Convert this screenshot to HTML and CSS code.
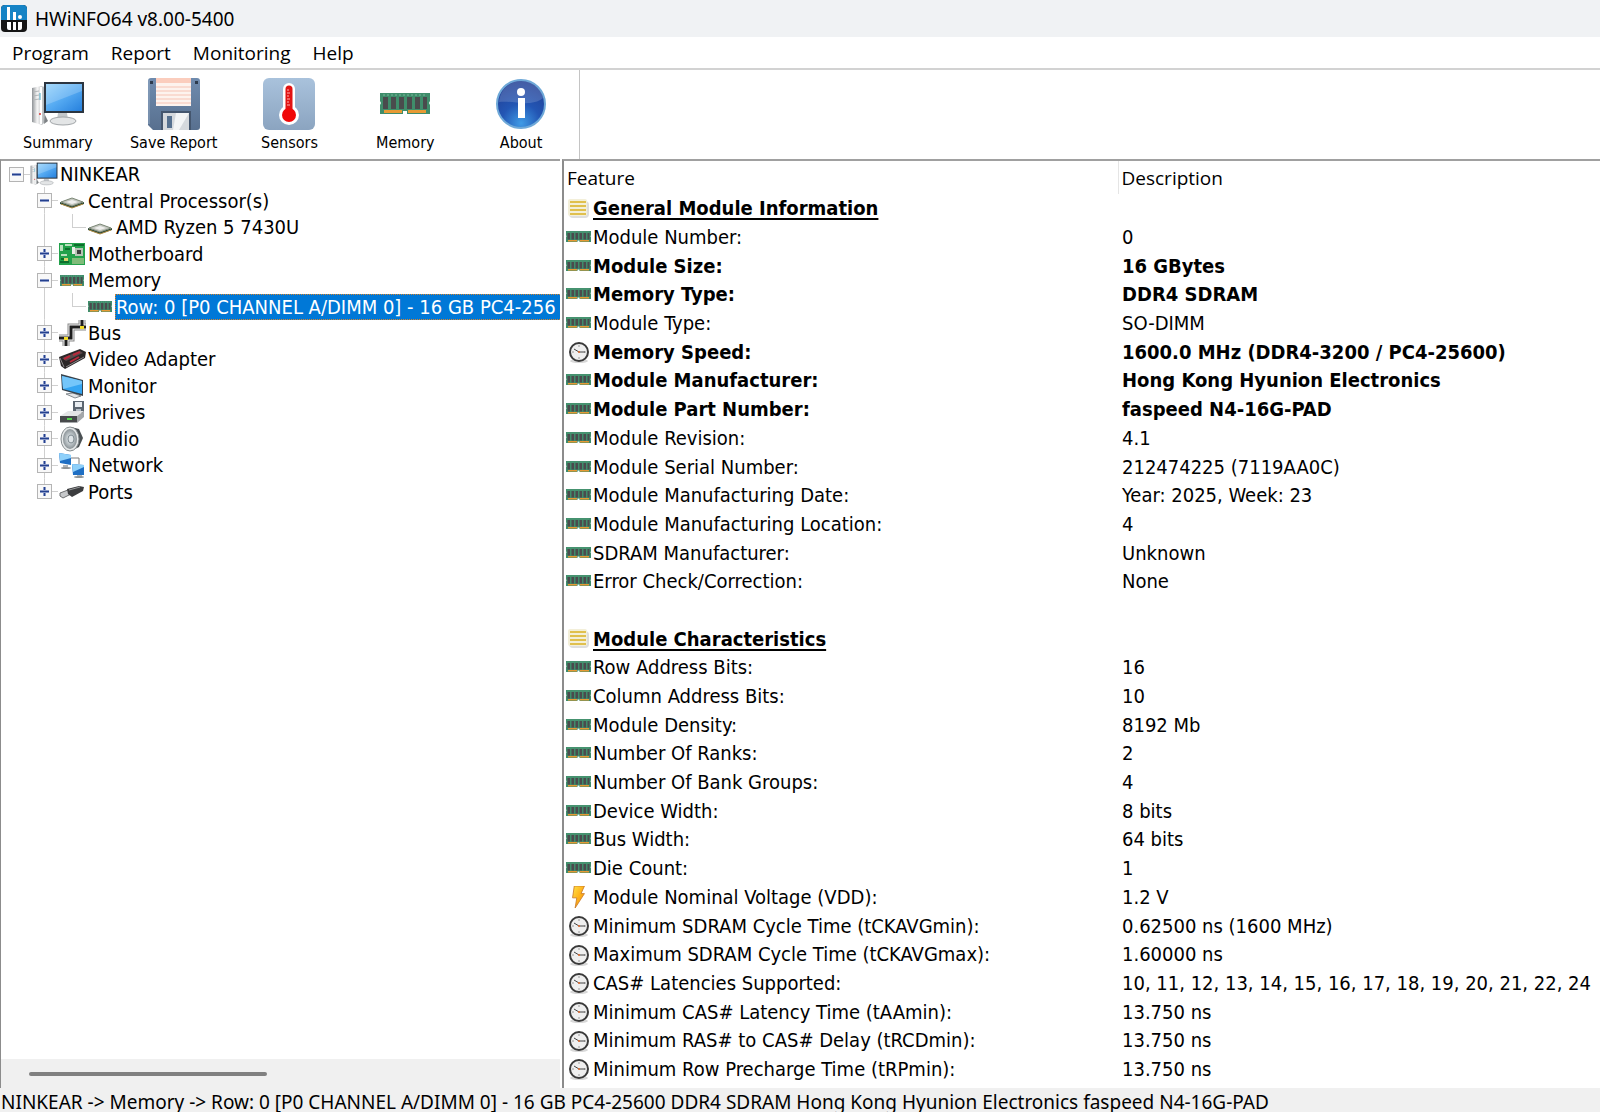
FILE: index.html
```
<!DOCTYPE html>
<html lang="en">
<head>
    <meta charset="UTF-8">
    <meta name="viewport" content="width=device-width, initial-scale=1.0">
    <title>HWiNFO64 v8.00-5400</title>
    <link rel="stylesheet" href="styles.css">
</head>
<body>
    <!-- shared icons -->
    <svg class="sprite" width="0" height="0" aria-hidden="true">
        <defs>
            <linearGradient id="screen" x1="0" y1="0" x2="1" y2="1">
                <stop offset="0" stop-color="#8fd0fb"/>
                <stop offset="0.5" stop-color="#55aaf2"/>
                <stop offset="1" stop-color="#2680dd"/>
            </linearGradient>
            <linearGradient id="metal" x1="0" y1="0" x2="1" y2="0">
                <stop offset="0" stop-color="#8e9296"/>
                <stop offset="0.4" stop-color="#f6f6f6"/>
                <stop offset="1" stop-color="#a9adb0"/>
            </linearGradient>
            <linearGradient id="steel" x1="0" y1="0" x2="0" y2="1">
                <stop offset="0" stop-color="#a9c2dc"/>
                <stop offset="1" stop-color="#8ba4c0"/>
            </linearGradient>
            <linearGradient id="floppy" x1="0" y1="0" x2="0" y2="1">
                <stop offset="0" stop-color="#6f8bae"/>
                <stop offset="1" stop-color="#58708f"/>
            </linearGradient>
            <radialGradient id="ball" cx="0.5" cy="0.9" r="0.9">
                <stop offset="0" stop-color="#3f9be6"/>
                <stop offset="0.45" stop-color="#2356b4"/>
                <stop offset="1" stop-color="#213d92"/>
            </radialGradient>
            <linearGradient id="flash" x1="0" y1="0" x2="1" y2="1">
                <stop offset="0" stop-color="#ffe34a"/>
                <stop offset="0.5" stop-color="#ffb31a"/>
                <stop offset="1" stop-color="#f08a10"/>
            </linearGradient>
            <radialGradient id="cone" cx="0.5" cy="0.5" r="0.5">
                <stop offset="0" stop-color="#f4f6f7"/>
                <stop offset="0.6" stop-color="#b4bcc0"/>
                <stop offset="1" stop-color="#8a9296"/>
            </radialGradient>
        </defs>
        <symbol id="i-computer" viewBox="0 0 54 46">
            <path d="M1 7l9-2 4 1v35l-3 3-10-3z" fill="url(#metal)"/>
            <path d="M2 11l6-1M2 15l6-1M2 19l6-1" stroke="#b3b6b8"/>
            <path d="M10 6v37" stroke="#fff" stroke-width="2"/>
            <path d="M9 12v7" stroke="#45a9c8"/>
            <circle cx="9" cy="33" r="1" fill="#d33"/>
            <path d="M14 34l3 6-4 3z" fill="#7d8184"/>
            <path d="M27 32h9l1 7H26z" fill="#c3c7ca"/>
            <ellipse cx="32" cy="40" rx="13" ry="4" fill="#e3e5e6" stroke="#a2a6a9"/>
            <path d="M13 1h40v31H13z" fill="#2c3540"/>
            <path d="M15 3h36v27H15z" fill="url(#screen)"/>
            <path d="M15 3h36v7L15 24z" fill="#fff" opacity="0.2"/>
        </symbol>
        <symbol id="i-memory" viewBox="0 0 50 21" preserveAspectRatio="none">
            <path d="M0 0h50v8l-1 2 1 2v9H27v-3h-4v3H0v-9l1-2-1-2z" fill="#3f8d6b"/>
            <path d="M3 4h5v12H3zM11 4h5v12h-5zM19 4h5v12h-5zM27 4h5v12h-5zM35 4h5v12h-5zM43 4h4v12h-4z" fill="#4a4b4d"/>
            <path d="M3 2h44" stroke="#79b79b" stroke-dasharray="2 2"/>
            <path d="M4 17h18v3H4zM28 17h18v3H28z" fill="#e79a34"/>
        </symbol>
        <symbol id="i-cpu" viewBox="0 0 28 26">
            <path d="M2 14l12 4 12-4v2l-12 4-12-4z" fill="#2f4a35"/>
            <path d="M3 14l11-4 11 4-11 4z" fill="#c4c7c0" stroke="#7b8776"/>
            <path d="M8 14l6-2 6 2-6 2z" fill="#efefed"/>
            <path d="M3 16l11 4 11-4" fill="none" stroke="#b08c46"/>
        </symbol>
        <symbol id="i-board" viewBox="0 0 28 26">
            <path d="M1 2h26v22H1z" fill="#22a14b"/>
            <path d="M2 4h3v6H2zM7 3h7v2H7zM3 13h6v2H3z" fill="#b9e0bd"/>
            <path d="M14 6h3v7h-3z" fill="#e8ece6"/>
            <path d="M17 7h8v8h-8z" fill="#b6c4b4"/>
            <path d="M19 9h4v4h-4z" fill="#3a3f3d"/>
            <path d="M14 18h12M14 20h12M14 22h12" stroke="#dcd6a8"/>
            <path d="M3 18h7M2 21h9M7 8h5M16 4h10" stroke="#0d6e2c" stroke-width="2"/>
            <path d="M6 17h4v3H6z" fill="#d9d36a"/>
        </symbol>
        <symbol id="i-bus" viewBox="0 0 28 26">
            <path d="M1 18h12V7h11V0M8 18v8M23 7h5" fill="none" stroke="#8a8a8a" stroke-width="7"/>
            <path d="M1 18h12V7h11V0M8 18v8M23 7h5" fill="none" stroke="#f2f2f2" stroke-width="5"/>
            <path d="M1 18h12V7h11V0M8 18v8M23 7h5" fill="none" stroke="#1e1e1e" stroke-width="3"/>
            <path d="M6 17h4v3H6zM22 6h4v3h-4z" fill="#f2dc28"/>
        </symbol>
        <symbol id="i-video" viewBox="0 0 28 26">
            <path d="M1 11L22 3l6 3-1 6L7 23l-4-3z" fill="#2b2728"/>
            <path d="M4 12l18-7 3 2L8 15z" fill="#57494b"/>
            <path d="M6 13l6-3M15 9l7-3M12 16l9-5" stroke="#b8283a" stroke-width="2"/>
            <path d="M2 12l4 9M8 21l18-10" stroke="#8d8b8c"/>
        </symbol>
        <symbol id="i-monitor" viewBox="0 0 28 26">
            <path d="M14 20l4 1v3l-4-1z" fill="#8f959a"/>
            <path d="M8 21l9 4 6-2-8-3z" fill="#e2e4e6" stroke="#858b90"/>
            <path d="M3 1l22 6v16L4 17z" fill="#37424c"/>
            <path d="M4 3l20 5v13L5 16z" fill="#35a5f2"/>
            <path d="M4 3l20 5v3L5 16z" fill="#74c6fa"/>
        </symbol>
        <symbol id="i-drives" viewBox="0 0 28 26">
            <path d="M15 2h11v12H15z" fill="#5c6670"/>
            <path d="M17 3h7v5h-7z" fill="#e9edf1"/>
            <path d="M18 10h5v4h-5z" fill="#b5bdc5"/>
            <path d="M2 17l8-5h16l-7 5z" fill="#e4e5e6"/>
            <path d="M2 17h17l7-5v6l-7 6H2z" fill="#a4a7a9"/>
            <path d="M2 17h17v6H2z" fill="#47494b"/>
            <path d="M9 20h5" stroke="#56d34f" stroke-width="2"/>
        </symbol>
        <symbol id="i-audio" viewBox="0 0 28 26">
            <path d="M13 1l8 2 4 9-4 9-8 4z" fill="#4b5154"/>
            <ellipse cx="12" cy="13" rx="9" ry="12" fill="#e6e9ea" stroke="#868d90"/>
            <ellipse cx="12" cy="13" rx="7" ry="10" fill="url(#cone)"/>
            <ellipse cx="13" cy="13" rx="3" ry="4" fill="#dfe5e8" stroke="#7e8a90"/>
        </symbol>
        <symbol id="i-network" viewBox="0 0 28 26">
            <path d="M13 6h8v6" fill="none" stroke="#7d7d7d"/>
            <path d="M5 13h5v3H5zM19 23h5v2h-5z" fill="#b0b4b7"/>
            <ellipse cx="8" cy="16" rx="5" ry="1" fill="#8f9497"/>
            <ellipse cx="21" cy="25" rx="5" ry="1" fill="#8f9497"/>
            <path d="M1 1l12 2v10L2 11z" fill="#1f6fc4"/>
            <path d="M1 1l12 2v3L2 9z" fill="#8ed0fa"/>
            <path d="M14 12l12 1v10l-11 0z" fill="#1f6fc4"/>
            <path d="M14 12l12 1v2l-11 5z" fill="#8ed0fa"/>
        </symbol>
        <symbol id="i-ports" viewBox="0 0 28 26">
            <path d="M2 14l8-3 3 4-8 4-3-2z" fill="#c6c8ca" stroke="#6c6e70"/>
            <path d="M9 10l12-3 5 1-1 4-11 6-4-3z" fill="#3c3d3f"/>
            <path d="M11 11l11-3" stroke="#97999b"/>
        </symbol>
        <symbol id="i-list" viewBox="0 0 25 22">
            <rect x="3" y="3" width="20" height="17" rx="4" fill="#dededd"/>
            <rect x="2" y="1" width="19" height="17" rx="2" fill="#f3efd9"/>
            <path d="M4 4h16M4 8h16M4 12h16M4 16h16" stroke="#e0c04e" stroke-width="2"/>
        </symbol>
        <symbol id="i-clock" viewBox="0 0 25 22">
            <ellipse cx="13" cy="20" rx="9" ry="2" fill="#d8d8d8"/>
            <circle cx="13" cy="11" r="9" fill="#efefef" stroke="#3a3a3a" stroke-width="2"/>
            <path d="M13 4v2M13 16v2M6 11h2M18 11h2" stroke="#9a9a9a"/>
            <path d="M8 8l5 3h6" fill="none" stroke="#444"/>
            <circle cx="13" cy="11" r="1" fill="#e06a2c"/>
        </symbol>
        <symbol id="i-flash" viewBox="0 0 24 26">
            <path d="M7 0h12l-4 9h4L8 26l2-12H5z" fill="url(#flash)" stroke="#c87a2a"/>
        </symbol>
    </svg>

    <header class="titlebar">
        <svg class="logo" width="26" height="27" viewBox="0 0 26 27">
            <rect width="26" height="27" rx="4" fill="#151515"/>
            <path d="M4 0h18a4 4 0 0 1 4 4v11H0V4a4 4 0 0 1 4-4z" fill="#1583c5"/>
            <path d="M6 2h3v13H6zM12 7h3v8h-3z" fill="#fff"/>
            <circle cx="19" cy="12" r="2" fill="#fff"/>
            <path d="M6 17h4v8H8a2 2 0 0 1-2-2zM12 17h3v8h-3zM17 17h4v6a2 2 0 0 1-2 2h-2z" fill="#fff"/>
        </svg>
        <h1>HWiNFO64 v8.00-5400</h1>
    </header>

    <nav class="menubar">
        <button type="button">Program</button>
        <button type="button">Report</button>
        <button type="button">Monitoring</button>
        <button type="button">Help</button>
    </nav>

    <div class="toolbar">
        <div class="tools">
            <button type="button">
                <svg width="54" height="52" viewBox="0 0 54 46"><use href="#i-computer"/></svg>
                <span>Summary</span>
            </button>
            <button type="button">
                <svg width="52" height="52" viewBox="0 0 52 52">
                    <path d="M3 0h46a3 3 0 0 1 3 3v46a3 3 0 0 1-3 3H5l-5-5V3a3 3 0 0 1 3-3z" fill="url(#floppy)"/>
                    <path d="M1 2v44" stroke="#93a9c4"/>
                    <path d="M8 0h35v28H8z" fill="#fdf3ee"/>
                    <path d="M8 0h35v5H8z" fill="#fbcdbd"/>
                    <path d="M8 9h35M8 13h35M8 17h35M8 21h35M8 25h35" stroke="#f6c3b4"/>
                    <path d="M2 3h3v3H2zM47 3h3v3h-3z" fill="#2d3b4e"/>
                    <path d="M13 33h30v19H13z" fill="#44566e"/>
                    <path d="M15 35h26v17H15z" fill="#d5d9dd"/>
                    <path d="M28 35h13L31 52h-6z" fill="#f3f5f6"/>
                    <path d="M19 38h5v12h-5z" fill="#55708f"/>
                </svg>
                <span>Save Report</span>
            </button>
            <button type="button">
                <svg width="52" height="52" viewBox="0 0 52 52">
                    <rect width="52" height="52" rx="6" fill="url(#steel)"/>
                    <path d="M26 11v27" stroke="#fff" stroke-width="12" stroke-linecap="round"/>
                    <circle cx="26" cy="37" r="10" fill="#fff"/>
                    <path d="M26 11v26" stroke="#e11212" stroke-width="7" stroke-linecap="round"/>
                    <circle cx="26" cy="37" r="7" fill="#f00808"/>
                    <path d="M24 12h2M24 15h3M24 18h2M24 21h3M24 24h2M24 27h3" stroke="#ffb0b0"/>
                </svg>
                <span>Sensors</span>
            </button>
            <button type="button">
                <svg width="50" height="52" viewBox="0 0 50 52"><use href="#i-memory" x="0" y="15" width="50" height="21"/></svg>
                <span>Memory</span>
            </button>
            <button type="button">
                <svg width="52" height="52" viewBox="0 0 52 52">
                    <circle cx="26" cy="26" r="24" fill="url(#ball)" stroke="#6fa9d8" stroke-width="2"/>
                    <path d="M4 24C5 12 14 3 26 3s21 9 22 17c-12 10-32 2-44 4z" fill="#fff" opacity="0.16"/>
                    <circle cx="26" cy="14" r="4" fill="#fff"/>
                    <path d="M23 20h7v20h-7z" fill="#fff"/>
                </svg>
                <span>About</span>
            </button>
        </div>
    </div>

    <main class="panes">
        <section class="tree-pane">
            <ul class="tree">
                <li><span class="cell end-right"><button type="button" class="toggle open" aria-label="Collapse NINKEAR"></button></span><svg class="icon"><use href="#i-computer"/></svg><span class="name">NINKEAR</span></li>
                <li><span class="cell"></span><span class="cell tee"><button type="button" class="toggle open" aria-label="Collapse Central Processor(s)"></button></span><svg class="icon"><use href="#i-cpu"/></svg><span class="name">Central Processor(s)</span></li>
                <li><span class="cell"></span><span class="cell line"></span><span class="cell corner"></span><svg class="icon"><use href="#i-cpu"/></svg><span class="name">AMD Ryzen 5 7430U</span></li>
                <li><span class="cell"></span><span class="cell tee"><button type="button" class="toggle" aria-label="Expand Motherboard"></button></span><svg class="icon"><use href="#i-board"/></svg><span class="name">Motherboard</span></li>
                <li><span class="cell"></span><span class="cell tee"><button type="button" class="toggle open" aria-label="Collapse Memory"></button></span><svg class="icon ram"><use href="#i-memory"/></svg><span class="name">Memory</span></li>
                <li><span class="cell"></span><span class="cell line"></span><span class="cell corner"></span><svg class="icon ram"><use href="#i-memory"/></svg><span class="name selected">Row: 0 [P0 CHANNEL A/DIMM 0] - 16 GB PC4-256</span></li>
                <li><span class="cell"></span><span class="cell tee"><button type="button" class="toggle" aria-label="Expand Bus"></button></span><svg class="icon"><use href="#i-bus"/></svg><span class="name">Bus</span></li>
                <li><span class="cell"></span><span class="cell tee"><button type="button" class="toggle" aria-label="Expand Video Adapter"></button></span><svg class="icon"><use href="#i-video"/></svg><span class="name">Video Adapter</span></li>
                <li><span class="cell"></span><span class="cell tee"><button type="button" class="toggle" aria-label="Expand Monitor"></button></span><svg class="icon"><use href="#i-monitor"/></svg><span class="name">Monitor</span></li>
                <li><span class="cell"></span><span class="cell tee"><button type="button" class="toggle" aria-label="Expand Drives"></button></span><svg class="icon"><use href="#i-drives"/></svg><span class="name">Drives</span></li>
                <li><span class="cell"></span><span class="cell tee"><button type="button" class="toggle" aria-label="Expand Audio"></button></span><svg class="icon"><use href="#i-audio"/></svg><span class="name">Audio</span></li>
                <li><span class="cell"></span><span class="cell tee"><button type="button" class="toggle" aria-label="Expand Network"></button></span><svg class="icon"><use href="#i-network"/></svg><span class="name">Network</span></li>
                <li><span class="cell"></span><span class="cell corner"><button type="button" class="toggle" aria-label="Expand Ports"></button></span><svg class="icon"><use href="#i-ports"/></svg><span class="name">Ports</span></li>
            </ul>
            <div class="scrollbar"><div class="thumb"></div></div>
        </section>

        <section class="detail-pane">
            <table>
                <thead>
                    <tr><th class="feature">Feature</th><th>Description</th></tr>
                </thead>
                <tbody>
                    <tr class="group"><td><svg><use href="#i-list"/></svg><span>General Module Information</span></td><td></td></tr>
                    <tr><td><svg class="ram"><use href="#i-memory"/></svg>Module Number:</td><td>0</td></tr>
                    <tr class="bold"><td><svg class="ram"><use href="#i-memory"/></svg>Module Size:</td><td>16 GBytes</td></tr>
                    <tr class="bold"><td><svg class="ram"><use href="#i-memory"/></svg>Memory Type:</td><td>DDR4 SDRAM</td></tr>
                    <tr><td><svg class="ram"><use href="#i-memory"/></svg>Module Type:</td><td>SO-DIMM</td></tr>
                    <tr class="bold"><td><svg><use href="#i-clock"/></svg>Memory Speed:</td><td>1600.0 MHz (DDR4-3200 / PC4-25600)</td></tr>
                    <tr class="bold"><td><svg class="ram"><use href="#i-memory"/></svg>Module Manufacturer:</td><td>Hong Kong Hyunion Electronics</td></tr>
                    <tr class="bold"><td><svg class="ram"><use href="#i-memory"/></svg>Module Part Number:</td><td>faspeed N4-16G-PAD</td></tr>
                    <tr><td><svg class="ram"><use href="#i-memory"/></svg>Module Revision:</td><td>4.1</td></tr>
                    <tr><td><svg class="ram"><use href="#i-memory"/></svg>Module Serial Number:</td><td>212474225 (7119AA0C)</td></tr>
                    <tr><td><svg class="ram"><use href="#i-memory"/></svg>Module Manufacturing Date:</td><td>Year: 2025, Week: 23</td></tr>
                    <tr><td><svg class="ram"><use href="#i-memory"/></svg>Module Manufacturing Location:</td><td>4</td></tr>
                    <tr><td><svg class="ram"><use href="#i-memory"/></svg>SDRAM Manufacturer:</td><td>Unknown</td></tr>
                    <tr><td><svg class="ram"><use href="#i-memory"/></svg>Error Check/Correction:</td><td>None</td></tr>
                    <tr><td>&nbsp;</td><td></td></tr>
                    <tr class="group"><td><svg><use href="#i-list"/></svg><span>Module Characteristics</span></td><td></td></tr>
                    <tr><td><svg class="ram"><use href="#i-memory"/></svg>Row Address Bits:</td><td>16</td></tr>
                    <tr><td><svg class="ram"><use href="#i-memory"/></svg>Column Address Bits:</td><td>10</td></tr>
                    <tr><td><svg class="ram"><use href="#i-memory"/></svg>Module Density:</td><td>8192 Mb</td></tr>
                    <tr><td><svg class="ram"><use href="#i-memory"/></svg>Number Of Ranks:</td><td>2</td></tr>
                    <tr><td><svg class="ram"><use href="#i-memory"/></svg>Number Of Bank Groups:</td><td>4</td></tr>
                    <tr><td><svg class="ram"><use href="#i-memory"/></svg>Device Width:</td><td>8 bits</td></tr>
                    <tr><td><svg class="ram"><use href="#i-memory"/></svg>Bus Width:</td><td>64 bits</td></tr>
                    <tr><td><svg class="ram"><use href="#i-memory"/></svg>Die Count:</td><td>1</td></tr>
                    <tr><td><svg><use href="#i-flash"/></svg>Module Nominal Voltage (VDD):</td><td>1.2 V</td></tr>
                    <tr><td><svg><use href="#i-clock"/></svg>Minimum SDRAM Cycle Time (tCKAVGmin):</td><td>0.62500 ns (1600 MHz)</td></tr>
                    <tr><td><svg><use href="#i-clock"/></svg>Maximum SDRAM Cycle Time (tCKAVGmax):</td><td>1.60000 ns</td></tr>
                    <tr><td><svg><use href="#i-clock"/></svg>CAS# Latencies Supported:</td><td>10, 11, 12, 13, 14, 15, 16, 17, 18, 19, 20, 21, 22, 24</td></tr>
                    <tr><td><svg><use href="#i-clock"/></svg>Minimum CAS# Latency Time (tAAmin):</td><td>13.750 ns</td></tr>
                    <tr><td><svg><use href="#i-clock"/></svg>Minimum RAS# to CAS# Delay (tRCDmin):</td><td>13.750 ns</td></tr>
                    <tr><td><svg><use href="#i-clock"/></svg>Minimum Row Precharge Time (tRPmin):</td><td>13.750 ns</td></tr>
                    <tr><td><svg><use href="#i-clock"/></svg></td><td></td></tr>
                </tbody>
            </table>
        </section>
    </main>

    <footer class="statusbar">NINKEAR -&gt; Memory -&gt; Row: 0 [P0 CHANNEL A/DIMM 0] - 16 GB PC4-25600 DDR4 SDRAM Hong Kong Hyunion Electronics faspeed N4-16G-PAD</footer>
</body>
</html>
```
FILE: styles.css
```
* {
    box-sizing: border-box;
}
body {
    margin: 0;
    height: 100vh;
    display: flex;
    flex-direction: column;
    overflow: hidden;
    background-color: #fff;
    color: #000;
    font-family: "DejaVu Sans Condensed", Tahoma, sans-serif;
    font-size: 20px;
    white-space: nowrap;
}
button {
    padding: 0;
    border: 0;
    background: none;
    color: inherit;
    font: inherit;
}
.sprite {
    position: absolute;
}

/* title and menu */
.titlebar {
    display: flex;
    align-items: center;
    gap: 8px;
    height: 37px;
    padding-left: 1px;
    background-color: #f0f2f4;
}
.titlebar h1, .menubar, .statusbar, th {
    margin: 0;
    font-family: "Noto Sans", "Segoe UI", sans-serif;
    font-size: 19px;
    font-weight: normal;
}
.menubar, th {
    font-family: "Open Sans", "Segoe UI", sans-serif;
}
.menubar {
    display: flex;
    gap: 22px;
    height: 33px;
    padding-left: 12px;
    border-bottom: 2px solid #d2d2d2;
}

/* toolbar */
.toolbar {
    height: 89px;
}
.tools {
    display: flex;
    width: 580px;
    height: 100%;
    border-right: 1px solid #c4c4c4;
}
.tools button {
    display: flex;
    flex: 1;
    flex-direction: column;
    align-items: center;
    gap: 2px;
    padding-top: 8px;
    font-size: 16px;
    line-height: 22px;
}

/* panes */
.panes {
    display: flex;
    flex: 1;
    gap: 2px;
    min-height: 0;
}
.tree-pane {
    display: flex;
    flex-direction: column;
    width: 35%;
    border-top: 2px solid #a0a0a0;
    border-left: 1px solid #8c8c8c;
    overflow: hidden;
}
.tree {
    display: grid;
    grid-auto-rows: 1fr;
    height: 344px;
    margin: 0;
    padding: 0 0 0 1px;
    list-style: none;
}
.tree li {
    display: flex;
    align-items: center;
    min-width: 0;
    line-height: 26px;
}
.cell {
    display: flex;
    flex: none;
    align-items: center;
    justify-content: center;
    align-self: stretch;
    width: 28px;
    background-repeat: no-repeat;
}
.end-right {
    background-image: linear-gradient(#cfcfcf, #cfcfcf);
    background-position: right center;
    background-size: 14px 1px;
}
.line {
    background-image: linear-gradient(#cfcfcf, #cfcfcf);
    background-position: center;
    background-size: 1px 100%;
}
.tee {
    background-image: linear-gradient(#cfcfcf, #cfcfcf), linear-gradient(#cfcfcf, #cfcfcf);
    background-position: center, right center;
    background-size: 1px 100%, 14px 1px;
}
.corner {
    background-image: linear-gradient(#cfcfcf, #cfcfcf), linear-gradient(#cfcfcf, #cfcfcf);
    background-position: center top, right center;
    background-size: 1px 50%, 14px 1px;
}
.toggle {
    width: 15px;
    height: 15px;
    border: 1px solid #b4b4b4;
    background-color: #f8f8f8;
    background-image: linear-gradient(#b9c4e4, #24408e, #b9c4e4), linear-gradient(to right, #b9c4e4, #24408e, #b9c4e4);
    background-position: center;
    background-repeat: no-repeat;
    background-size: 9px 3px, 3px 9px;
}
.toggle.open {
    background-size: 9px 3px, 0 0;
}
.icon {
    flex: none;
    width: 28px;
    height: 26px;
}
.icon.ram {
    width: 24px;
    height: 11px;
    margin: 0 2px;
}
.name {
    padding: 0 2px;
}
.selected {
    flex: 1;
    min-width: 0;
    margin-left: 1px;
    padding: 0;
    border: 1px dotted #d9842a;
    border-right: 0;
    background-color: #0078d7;
    color: #fff;
    line-height: 24px;
    overflow: hidden;
}
.scrollbar {
    display: flex;
    align-items: center;
    height: 29px;
    margin-top: auto;
    padding-left: 28px;
    background-color: #f0f0f0;
}
.thumb {
    width: 238px;
    height: 4px;
    border-radius: 2px;
    background-color: #808080;
}
.detail-pane {
    flex: 1;
    border-top: 2px solid #a0a0a0;
    border-left: 2px solid #8c8c8c;
    overflow: hidden;
}
table {
    width: 100%;
    height: calc(100% + 24px);
    border-collapse: collapse;
    table-layout: fixed;
}
th {
    height: 33px;
    padding: 0 0 0 3px;
    line-height: 32px;
    text-align: left;
}
.feature {
    width: 554px;
    border-right: 1px solid #e5e5e5;
}
td {
    padding: 0 0 0 4px;
    line-height: 28px;
}
td:first-child {
    padding-left: 2px;
}
td svg {
    width: 25px;
    height: 22px;
    margin: 0 2px 2px 0;
    vertical-align: middle;
}
td .ram {
    height: 11px;
    margin-bottom: 4px;
}
.bold td, .group td {
    font-weight: bold;
}
.group span {
    text-decoration: underline;
    text-decoration-thickness: 2px;
    text-underline-offset: 3px;
}

.statusbar {
    min-height: 24px;
    padding-left: 1px;
    background-color: #f0f0f0;
    line-height: 28px;
    max-height: 24px;
}
```
